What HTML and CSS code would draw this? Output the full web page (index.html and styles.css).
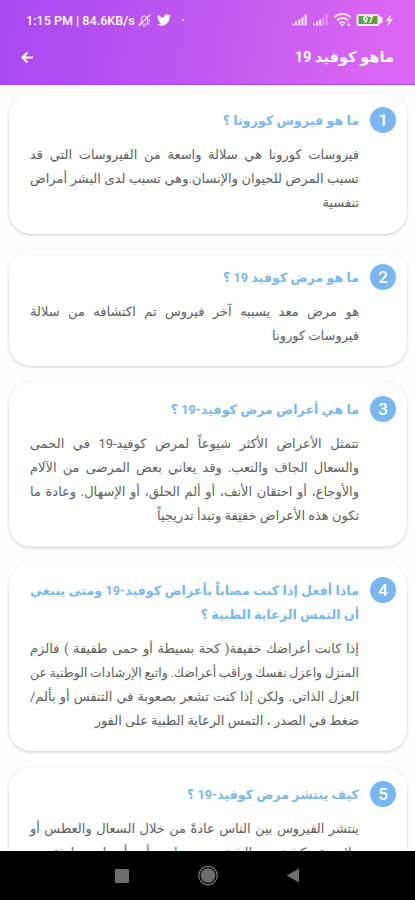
FILE: index.html
```html
<!DOCTYPE html>
<html lang="ar">
<head>
<meta charset="utf-8">
<title>ماهو كوفيد 19</title>
<link rel="stylesheet" href="styles.css">
</head>
<body>
<div class="screen">
  <header class="top">
    <div class="status">
      <span class="clock">1:15 PM | 84.6KB/s</span>
      <svg class="bell" width="15" height="15" viewBox="0 0 15 15"><path d="M3 11h8.500l-1-2V6a3 3 0 0 0-6 0v3zM6 13h3M13.500 1.500 1.500 13M12.500 6v3" fill="none" stroke="#f3dcff" stroke-width="1.200"/></svg>
      <svg class="bird" width="14" height="12" viewBox="0 0 24 20"><path d="M24 2.400a10 10 0 0 1-2.800.8A5 5 0 0 0 23.300.4a10 10 0 0 1-3.100 1.200 5 5 0 0 0-8.400 4.500A14 14 0 0 1 1.700 1 5 5 0 0 0 3.200 7.500 5 5 0 0 1 1 6.900a5 5 0 0 0 3.900 4.900 5 5 0 0 1-2.200.1 5 5 0 0 0 4.600 3.400A10 10 0 0 1 0 17.400 14 14 0 0 0 21.500 5 10 10 0 0 0 24 2.400z" fill="#fff"/></svg>
      <i class="dot"></i>
      <svg class="indicators" width="104" height="14" viewBox="0 0 104 14">
        <g fill="#f8e1ff"><path d="M1 10.500h2V12.500H1zM4 8.500h2.200v4H4zM7.200 6.500h2.200v6H7.200zM10.400 4h2.200v8.500h-2.200zM13.600 1.500h2.200v11h-2.200z"/><path d="M22 10.500h2V12.500h-2zM25 8.500h2.200v4H25zM28.200 6.500h2.200v6h-2.200z"/><path d="M31.400 4h2.200v8.500h-2.200zM34.600 1.500h2.200v11h-2.200z" opacity=".4"/></g>
        <g fill="none" stroke="#fbe8ff" stroke-width="1.900"><path d="M43.500 4.500a11 11 0 0 1 16 0M46 7.400a7.500 7.500 0 0 1 11 0M48.500 10.200a4 4 0 0 1 5.500 0"/></g>
        <circle cx="51.300" cy="12" r="1.300" fill="#fbe8ff"/><path d="M57.500 9v4M56 11.500l1.500 1.500 1.500-1.500" stroke="#fbe8ff" fill="none" stroke-width=".9"/>
        <path d="M67.500 1h19q1.500 0 2 2l3 1.500v5l-3 1.500q-.5 2-2 2h-19q-2 0-2-2V3q0-2 2-2z" fill="#fae3ff"/><rect x="67.500" y="3" width="19" height="8" fill="#55a53b"/>
        <text class="charge" x="77" y="10.200" text-anchor="middle">97</text>
        <path d="M100 1.500 95 8h3l-1.500 5 5.500-7H98.800z" fill="#fff"/>
      </svg>
    </div>
    <div class="appbar">
      <svg width="13" height="13" viewBox="0 0 13 13"><path d="M12 6.500H2M6.500 1.500l-5 5 5 5" fill="none" stroke="#fff" stroke-width="2.200"/></svg>
      <h1 dir="rtl">ماهو كوفيد 19</h1>
    </div>
  </header>

  <main class="list" dir="rtl">
    <article class="card">
      <span class="num">1</span>
      <div class="text">
        <h2><span>ما هو فيروس كورونا ؟</span></h2>
        <p><span class="full">فيروسات كورونا هي سلالة واسعة من الفيروسات التي قد</span>
        <span class="full">تسبب المرض للحيوان والإنسان.وهي تسبب لدى البشر أمراض</span>
        <span>تنفسية</span></p>
      </div>
    </article>
    <article class="card">
      <span class="num">2</span>
      <div class="text">
        <h2><span>ما هو مرض كوفيد 19 ؟</span></h2>
        <p><span class="full">هو مرض معد يسببه آخر فيروس تم اكتشافه من سلالة</span>
        <span>فيروسات كورونا</span></p>
      </div>
    </article>
    <article class="card">
      <span class="num">3</span>
      <div class="text">
        <h2><span>ما هي أعراض مرض كوفيد-19 ؟</span></h2>
        <p><span class="full">تتمثل الأعراض الأكثر شيوعاً لمرض كوفيد-19 في الحمى</span>
        <span class="full">والسعال الجاف والتعب. وقد يعاني بعض المرضى من الآلام</span>
        <span class="full">والأوجاع، أو احتقان الأنف، أو ألم الحلق، أو الإسهال. وعادة ما</span>
        <span>تكون هذه الأعراض خفيفة وتبدأ تدريجياً</span></p>
      </div>
    </article>
    <article class="card">
      <span class="num">4</span>
      <div class="text">
        <h2><span class="full">ماذا أفعل إذا كنت مصاباً بأعراض كوفيد-19 ومتى ينبغي</span>
        <span>أن التمس الرعاية الطبية ؟</span></h2>
        <p><span class="full">إذا كانت أعراضك خفيفة( كحة بسيطة أو حمى طفيفة ) فالزم</span>
        <span class="full tight">المنزل واعزل نفسك وراقب أعراضك. واتبع الإرشادات الوطنية عن</span>
        <span class="full">العزل الذاتي. ولكن إذا كنت تشعر بصعوبة في التنفس أو بألم/</span>
        <span>ضغط في الصدر ، التمس الرعاية الطبية على الفور</span></p>
      </div>
    </article>
    <article class="card">
      <span class="num">5</span>
      <div class="text">
        <h2><span>كيف ينتشر مرض كوفيد-19 ؟</span></h2>
        <p><span class="full">ينتشر الفيروس بين الناس عادةً من خلال السعال والعطس أو</span>
        <span class="full">ملامسة كشخص الشخص مصاب أو أسطح ملوثة به</span></p>
      </div>
    </article>
  </main>

  <nav class="nav">
    <svg width="415" height="49" viewBox="0 0 415 49"><g fill="#6d6d6d"><rect x="115" y="18" width="14" height="14" rx="1"/><circle cx="208" cy="24.500" r="7.300"/><path d="M286.500 24.500 299 17.500v14z"/></g><circle cx="208" cy="24.500" r="9.200" fill="none" stroke="#777" stroke-width="1.200"/></svg>
  </nav>
</div>
</body>
</html>
```
FILE: styles.css
```css
* { box-sizing: border-box; }
body { margin: 0; background: #fefefe; font-family: Roboto, "DejaVu Sans", sans-serif; }
.screen { width: 415px; height: 900px; display: flex; flex-direction: column; overflow: hidden; }
.top { flex: none; height: 85px; background: linear-gradient(100deg, #a748f1, #c158f0 50%, #df69f1); border-bottom: 1px solid #b044e6; color: #fff; }
.status { height: 40px; display: flex; align-items: center; padding: 0 20px 0 26px; }
.clock { font: 500 12.600px Roboto, sans-serif; width: 109px; white-space: nowrap; }
.bell { margin-left: 2px; }
.bird { margin-left: 5px; }
.dot { width: 2px; height: 2px; border-radius: 50%; background: #fff; margin-left: 11px; }
.indicators { margin-left: auto; }
.charge { font: 700 9px Roboto, sans-serif; fill: #fff; }
.appbar { height: 34px; display: flex; align-items: center; justify-content: space-between; padding: 0 21px; }
h1 { margin: 0; font-size: 14.600px; font-weight: 700; }
.list { flex: 1; min-height: 0; overflow: hidden; padding: 8px 8px 0 9px; display: flex; flex-direction: column; gap: 16px; }
.card { flex: none; display: flex; align-items: flex-start; gap: 11px; padding: 16px 11px 18.500px 21px; border-radius: 22px; background: #fff; box-shadow: 0 1px 3px rgba(0,0,0,.2); }
.num { flex: none; width: 26px; height: 26px; margin-top: -2px; border-radius: 50%; background: #78b7f2; color: #fff; font: 500 17px/26px Roboto, sans-serif; text-align: center; }
.text { width: 329px; }
h2, p { margin: 0; line-height: 24px; }
h2 { font-size: 12.700px; font-weight: 700; color: #7bb8ef; margin-bottom: 10px; }
p { font-size: 13px; color: #606060; }
h2 span, p span { display: block; height: 24px; white-space: nowrap; }
.full { text-align: justify; text-align-last: justify; word-spacing: -1px; }
.tight { font-size: 12.500px; }
.nav { flex: none; height: 49px; background: #000; }
.nav svg { display: block; }
```
